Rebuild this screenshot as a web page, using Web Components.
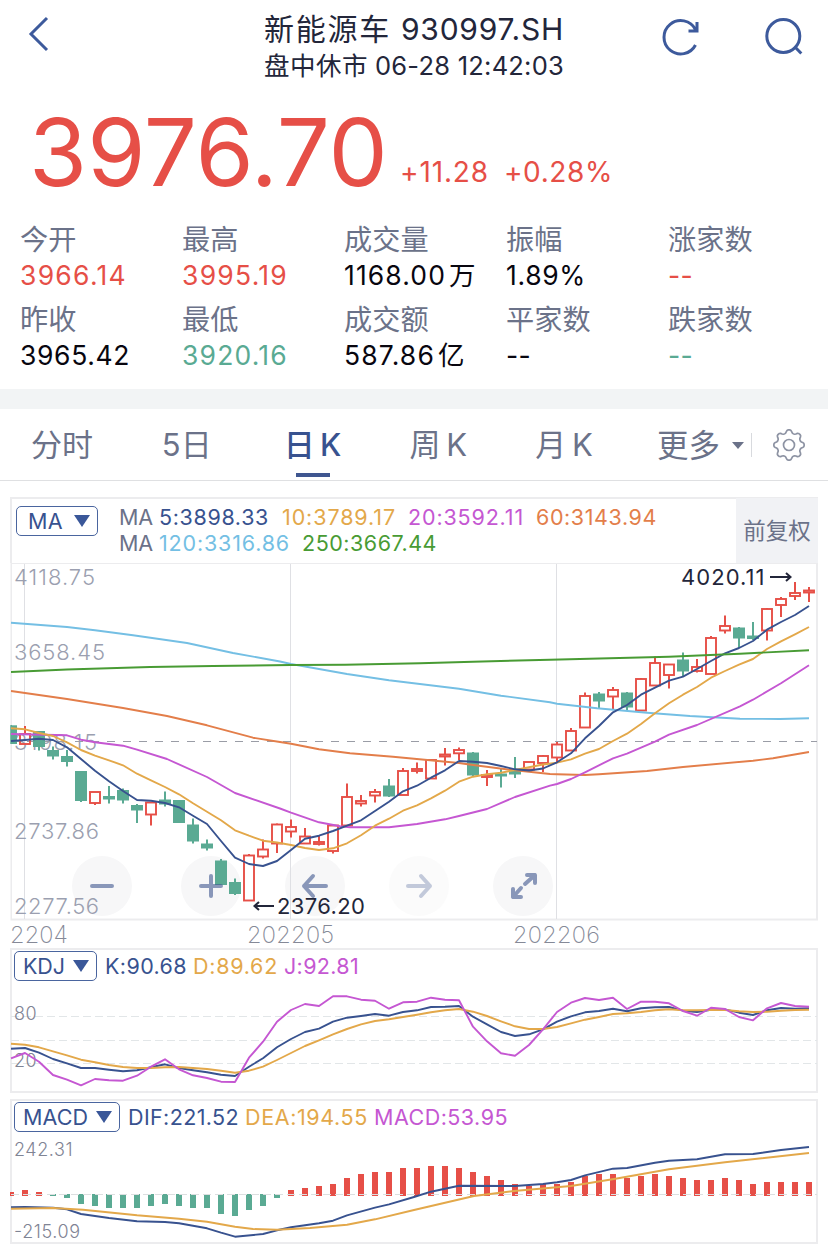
<!DOCTYPE html>
<html lang="zh-CN">
<head>
<meta charset="UTF-8">
<title>新能源车 930997.SH</title>
<style>
    :root {
        --ink: #23263a;
        --black: #08060f;
        --muted: #6b7289;
        --red: #e64f47;
        --green: #5aaa93;
        --blue: #38528f;
        --amber: #e3a84a;
        --pink: #c557d2;
        --orange: #e37e4a;
        --sky: #74bfe4;
        --leaf: #489b34;
        --band: #f2f4f5;
        --frame: #ececee;
    }

    body {
        margin: 0;
        width: 828px;
        height: 1247px;
        overflow: hidden;
        background: #fff;
        color: var(--ink);
        font-family: Inter, "Noto Sans CJK SC", sans-serif;
    }

    .band {
        height: 20px;
        background: var(--band);
    }

    .charts {
        display: flex;
        flex-direction: column;
        padding: 16px 10px 0;
    }
</style>
</head>
<body>
    <quote-header name="新能源车" code="930997.SH" state="盘中休市" time="06-28 12:42:03"></quote-header>
    <price-banner price="3976.70" change="+11.28" percent="+0.28%"></price-banner>
    <stat-grid>
        <stat-item label="今开" value="3966.14" w="107" tone="red"></stat-item>
        <stat-item label="最高" value="3995.19" w="106" tone="red"></stat-item>
        <stat-item label="成交量" value="1168.00" w="102" unit="万"></stat-item>
        <stat-item label="振幅" value="1.89%" w="80"></stat-item>
        <stat-item label="涨家数" value="--" w="25" tone="red"></stat-item>
        <stat-item label="昨收" value="3965.42" w="110"></stat-item>
        <stat-item label="最低" value="3920.16" w="106" tone="green"></stat-item>
        <stat-item label="成交额" value="587.86" w="91" unit="亿"></stat-item>
        <stat-item label="平家数" value="--" w="25"></stat-item>
        <stat-item label="跌家数" value="--" w="25" tone="green"></stat-item>
    </stat-grid>
    <div class="band"></div>
    <tab-bar>
        <tab-item>分时</tab-item>
        <tab-item>5日</tab-item>
        <tab-item active>日&#8201;K</tab-item>
        <tab-item>周&#8201;K</tab-item>
        <tab-item>月&#8201;K</tab-item>
    </tab-bar>
    <div class="charts">
        <k-panel></k-panel>
        <kdj-panel></kdj-panel>
        <macd-panel></macd-panel>
    </div>

<script>
    const STEP = 14;
    const LEFT = 11;
    const xAt = i => LEFT + i * STEP;

    // one y per trading day
    const daily = ys => ys.map((y, i) => `${xAt(i)},${y}`).join(' ');
    const line = (points, color, width = 1.9) =>
        `<polyline points="${points}" fill="none" stroke="var(--${color})" stroke-width="${width}" stroke-linejoin="round"/>`;
    const label = (x, y, w, text, cls = 'axis') =>
        `<text x="${x}" y="${y}" textLength="${w}" class="${cls}">${text}</text>`;

    class FitText extends HTMLElement {
        constructor() {
            super();
            this.attachShadow({ mode: 'open' });
            this.shadowRoot.innerHTML = `
                <style>
                    :host { display: inline-block; flex: none; white-space: nowrap; }
                </style>
                <slot></slot>
            `;
        }

        connectedCallback() {
            const target = Number(this.getAttribute('w'));
            const range = document.createRange();
            range.selectNodeContents(this);
            const natural = range.getBoundingClientRect().width;
            if (!target || !natural) return;
            this.style.letterSpacing = `${(target - natural) / this.textContent.length}px`;
            this.style.width = `${target}px`;
        }
    }

    class QuoteHeader extends HTMLElement {
        constructor() {
            super();
            this.attachShadow({ mode: 'open' });
        }

        connectedCallback() {
            this.shadowRoot.innerHTML = `
                <style>
                    :host {
                        display: grid;
                        grid-template-columns: 264px 300px 1fr;
                        height: 90px;
                    }
                    svg { display: block; fill: none; stroke: #3d5a9c; stroke-width: 3; }
                    .back { margin: 12px 0 0 20px; }
                    .title, .state { display: flex; justify-content: space-between; }
                    .title { height: 43px; padding-top: 8px; line-height: 43px; font-size: 30px; }
                    .state { height: 29px; line-height: 29px; font-size: 25.500px; }
                    .actions { display: flex; gap: 57px; padding: 14px 0 0 96px; }
                </style>
                <svg class="back" width="34" height="44"><path d="M27 6 11 22 27 38"/></svg>
                <div>
                    <div class="title">
                        <fit-text w="127">${this.getAttribute('name')}</fit-text>
                        <fit-text w="163">${this.getAttribute('code')}</fit-text>
                    </div>
                    <div class="state">
                        <fit-text w="104">${this.getAttribute('state')}</fit-text>
                        <fit-text w="189">${this.getAttribute('time')}</fit-text>
                    </div>
                </div>
                <div class="actions">
                    <svg width="46" height="46"><path d="M35.500 31A16.700 16.700 0 1 1 35.500 15.500M37 8V17H28.500"/></svg>
                    <svg width="46" height="46"><circle cx="20.300" cy="22" r="16.500"/><path d="M32 33 38.300 39.500"/></svg>
                </div>
            `;
        }
    }

    class PriceBanner extends HTMLElement {
        constructor() {
            super();
            this.attachShadow({ mode: 'open' });
        }

        connectedCallback() {
            this.shadowRoot.innerHTML = `
                <style>
                    :host {
                        display: flex;
                        align-items: flex-start;
                        height: 125px;
                        padding-left: 29px;
                        color: var(--red);
                        font-size: 28px;
                        line-height: 164px;
                    }
                    .price { font-size: 94px; line-height: 124px; }
                    .change { margin-left: 12px; }
                    .percent { margin-left: 15px; }
                </style>
                <fit-text class="price" w="359">${this.getAttribute('price')}</fit-text>
                <fit-text class="change" w="89">${this.getAttribute('change')}</fit-text>
                <fit-text class="percent" w="109">${this.getAttribute('percent')}</fit-text>
            `;
        }
    }

    class StatGrid extends HTMLElement {
        constructor() {
            super();
            this.attachShadow({ mode: 'open' });
            this.shadowRoot.innerHTML = `
                <style>
                    :host {
                        display: grid;
                        grid-template-columns: repeat(5, 162px);
                        grid-auto-rows: 80px;
                        box-sizing: border-box;
                        height: 174px;
                        padding: 5px 0 0 20px;
                    }
                </style>
                <slot></slot>
            `;
        }
    }

    class StatItem extends HTMLElement {
        constructor() {
            super();
            this.attachShadow({ mode: 'open' });
        }

        connectedCallback() {
            const unit = this.getAttribute('unit');
            this.shadowRoot.innerHTML = `
                <style>
                    :host { display: flex; flex-direction: column; }
                    .label { color: var(--muted); font-size: 28.200px; line-height: 41px; height: 38px; }
                    .value {
                        display: flex;
                        gap: 3px;
                        color: var(--${this.getAttribute('tone') || 'black'});
                        font-size: 26.500px;
                        line-height: 35px;
                    }
                </style>
                <div class="label">${this.getAttribute('label')}</div>
                <div class="value"><fit-text w="${this.getAttribute('w')}">${this.getAttribute('value')}</fit-text>${unit ? `<span>${unit}</span>` : ''}</div>
            `;
        }
    }

    class TabItem extends HTMLElement {
        constructor() {
            super();
            this.attachShadow({ mode: 'open' });
            this.shadowRoot.innerHTML = `
                <style>
                    :host {
                        display: flex;
                        flex-direction: column;
                        align-items: center;
                        justify-content: space-between;
                        height: 68px;
                        line-height: 72px;
                    }
                    :host([active]) { color: var(--blue); font-weight: 500; }
                    span { height: 64px; }
                    i { width: 34px; height: 4px; }
                    :host([active]) i { background: #3f5690; }
                </style>
                <span><slot></slot></span>
                <i></i>
            `;
        }
    }

    class TabBar extends HTMLElement {
        constructor() {
            super();
            this.attachShadow({ mode: 'open' });
            this.shadowRoot.innerHTML = `
                <style>
                    :host {
                        display: grid;
                        grid-template-columns: 124px 125.500px 126px 125.500px 126px 1fr;
                        box-sizing: border-box;
                        height: 72px;
                        border-bottom: 1px solid #dfe0e2;
                        color: var(--muted);
                        font-size: 31px;
                    }
                    .more {
                        display: flex;
                        align-items: center;
                        height: 72px;
                        padding-left: 30px;
                    }
                    .more-text { margin-top: -5px; font-size: 31.500px; }
                    .caret {
                        margin-left: 12px;
                        border: 6.500px solid transparent;
                        border-top: 7px solid var(--muted);
                        border-bottom: 0;
                    }
                    .rule { width: 1px; height: 24px; margin: 0 20px 0 7px; background: #d8dade; }
                    svg { fill: none; stroke: #8d93a3; stroke-width: 1.7; }
                </style>
                <slot></slot>
                <div class="more">
                    <span class="more-text">更多</span>
                    <span class="caret"></span>
                    <span class="rule"></span>
                    <svg width="34" height="34" viewBox="-17 -17 34 34">
                        <path stroke-linejoin="round" d="${TabBar.gear()}"/>
                        <circle r="5.500"/>
                    </svg>
                </div>
            `;
        }

        // eight rounded teeth
        static gear() {
            const points = [];
            for (let a = 0; a < 360; a += 4) {
                const t = a * Math.PI / 180;
                const r = 13.6 + 1.7 * Math.tanh(1.6 * Math.cos(8 * t));
                points.push(`${(r * Math.sin(t)).toFixed(2)} ${(-r * Math.cos(t)).toFixed(2)}`);
            }
            return `M${points.join('L')}Z`;
        }
    }

    class IndicatorPick extends HTMLElement {
        constructor() {
            super();
            this.attachShadow({ mode: 'open' });
        }

        connectedCallback() {
            this.shadowRoot.innerHTML = `
                <style>
                    :host {
                        display: flex;
                        align-items: center;
                        justify-content: space-between;
                        box-sizing: border-box;
                        height: 30px;
                        padding: 0 7px 0 8px;
                        border: 1.500px solid #4a659f;
                        border-radius: 5px;
                        color: var(--blue);
                        font-size: 21.500px;
                        line-height: 28px;
                    }
                    i {
                        border: 8px solid transparent;
                        border-top: 12px solid #3a5799;
                        border-bottom: 0;
                    }
                </style>
                <fit-text w="${this.getAttribute('w')}">${this.getAttribute('name')}</fit-text>
                <i></i>
            `;
        }
    }

    const panelStyle = `
        :host { display: block; box-sizing: border-box; font-size: 21.500px; }
        svg { display: block; font-family: Inter, sans-serif; }
        .axis { fill: #9b9fb0; font-size: 22px; font-weight: 300; }
        .small { fill: #7f8494; font-size: 18px; font-weight: 300; }
        .date { fill: #858997; font-size: 23.500px; font-weight: 200; }
        .mark { fill: #23263a; font-size: 22px; }
        .row { display: flex; }
        .muted { color: var(--muted); }
        .blue { color: var(--blue); }
        .amber { color: var(--amber); }
        .pink { color: var(--pink); }
        .orange { color: var(--orange); }
        .sky { color: var(--sky); }
        .leaf { color: var(--leaf); }
    `;

    // [up, body top, body bottom, high, low]
    const candles = [
        [0, 725.3, 744, 725, 744], [1, 734, 744, 726, 744], [0, 731, 747, 731, 750.5], [0, 750, 756.5, 746.5, 759.5],
        [0, 756, 762, 750, 766.5], [0, 771, 801, 771, 802], [1, 792, 803, 792, 805], [0, 796, 799.5, 786, 803.5],
        [0, 790, 800.5, 788.5, 803.5], [0, 805, 810.5, 804, 823], [1, 802.5, 814.5, 802, 825.5], [0, 799.5, 804.5, 791.5, 806.5],
        [0, 800, 823, 800, 823], [0, 824.5, 841.5, 818.5, 843.5], [0, 843.5, 848.5, 839.5, 850.5], [0, 860.5, 885, 859, 885],
        [0, 882, 894, 878.5, 895], [1, 855.5, 900.5, 854, 900], [1, 849.5, 856.5, 839.5, 858.5], [1, 824.5, 843.5, 823.5, 853],
        [1, 827, 831.5, 819.5, 837.5], [1, 836.5, 843.5, 828, 844], [1, 842, 844, 835.5, 845.5], [1, 825.5, 851, 825, 853.5],
        [1, 797, 825.5, 783.5, 826], [1, 801, 803.5, 795, 806.5], [1, 792, 795.5, 789, 802.5], [0, 785.5, 796.5, 779, 797],
        [1, 771, 795, 768, 795], [1, 769, 771, 762.5, 773.5], [1, 760, 778.5, 759, 779], [1, 754.5, 756.5, 748, 765.5],
        [1, 750, 753.3, 747.5, 760], [0, 752.5, 775.5, 752, 776], [1, 775, 777, 770, 786], [0, 773.5, 776.5, 768.5, 787.5],
        [0, 770, 774.5, 757, 778], [1, 762, 769.5, 762, 772], [1, 756, 763, 755, 772], [1, 744.5, 757.5, 742, 762],
        [1, 731, 750.5, 728, 751], [1, 696, 727.5, 692.5, 728], [0, 693.5, 701.5, 692, 708.5], [1, 690, 696.5, 687, 710],
        [0, 692.5, 707.5, 692, 710.5], [1, 679, 710.5, 678, 711], [1, 663, 685.5, 656.5, 686], [1, 664.5, 675, 664, 688.5],
        [0, 659.5, 671.5, 652.5, 676], [1, 667, 671, 659, 672.5], [1, 638, 674, 636, 674], [1, 626, 630.5, 615.5, 633.5],
        [0, 627.5, 638.5, 627, 648], [0, 635.5, 639, 622, 640], [1, 609, 630.5, 608, 640.5], [1, 599, 605, 597, 617],
        [1, 593, 596, 582, 600], [1, 590.5, 592.5, 587, 602]
    ];

    const ma5 = [741, 740, 738.7, 740, 747.3, 759, 770.7, 781.3, 791, 800, 800.7, 803, 807.3, 815.7, 824, 841, 857.7, 864, 866, 861,
        850, 838.7, 835.7, 831, 825.7, 820.3, 811, 801.7, 791.3, 785.7, 777.7, 770.3, 761, 761.7, 763, 766, 769.3, 770.5, 768.5, 762.3,
        753.3, 738.3, 726, 712.3, 705, 694.7, 687.7, 680.7, 676.7, 669, 661, 653.3, 648, 641, 629.7, 622, 615, 606];
    const ma10 = [728.3, 729.3, 733, 736, 742.3, 750, 755.7, 760.3, 765.3, 773.7, 780.3, 787, 794.3, 803.3, 811.7, 820.3, 830.3, 835.7, 840.7, 842.5,
        845, 848, 850, 848.3, 843.3, 835.3, 825.7, 818.7, 810.7, 805.3, 798.3, 790.7, 781.7, 776.7, 774.3, 772.7, 770, 767.3, 764.5, 762.7,
        759.3, 753.7, 749, 741, 733.7, 724, 713.3, 703.3, 694.7, 687, 677.7, 671, 664.7, 659, 649, 641.3, 634.3, 627];
    const ma20 = '11,734 67,735.3 81,739.7 95,742.3 123,745.7 137,749.7 167,759 207,777 235,793 280,808.5 291,812.7 319,822.3 340,826.3 350,827.3 389,827.3 417,824 445,819.3 459,816 487,809 515,797 550,785.7 557,784 571,779 585,772.3 613,758.3 627,753.7 655,741.7 669,734.7 697,725 740,706.3 753,699.7 781,683.3 809,665.3';
    const ma60 = '11,691 67,699 123,708 167,716 207,725.3 253,737.7 280,742 291,743.7 319,749.3 350,753.3 393,756.7 459,763 473,765 515,770.3 550,774 557,774.3 585,775 599,774.3 647,771 683,767 753,760.7 773,758.3 809,752';
    const ma120 = '11,622.7 67,627 95,630.3 133,635.3 187,643 233,653 280,661.5 291,664 347,674 389,680.3 459,688.7 501,695.7 550,702.3 557,703.7 597,708.3 647,712.7 690,716 740,718.7 780,719 809,718.3';
    const ma250 = '11,672 67,669.5 150,667 213,666 291,665 345,664.7 420,663.3 473,661.7 550,659.7 669,656.7 740,653.7 809,650.3';

    class KPanel extends HTMLElement {
        constructor() {
            super();
            this.attachShadow({ mode: 'open' });
        }

        candle([up, top, bottom, high, low], i) {
            const x = xAt(i);
            if (!up) {
                return `<path d="M${x} ${high}V${low}" stroke="var(--green)" stroke-width="2"/>
                    <rect x="${x - 6}" y="${top}" width="12" height="${bottom - top}" fill="var(--green)"/>`;
            }
            return `<path d="M${x} ${high}V${top}M${x} ${bottom}V${low}" stroke="var(--red)" stroke-width="2"/>
                <rect x="${x - 5}" y="${top}" width="10" height="${bottom - top}" fill="none" stroke="var(--red)" stroke-width="1.9"/>`;
        }

        connectedCallback() {
            const circles = [102, 211, 315, 419, 523].map((x, i) =>
                `<circle cx="${x}" cy="886" r="30" fill="${i === 3 ? '#fbfbfb' : '#f7f7f8'}"/>`).join('');
            this.shadowRoot.innerHTML = `
                <style>
                    ${panelStyle}
                    :host { height: 451px; }
                    .head {
                        display: grid;
                        grid-template-columns: 82px 1fr 82px;
                        box-sizing: border-box;
                        height: 66px;
                        padding-left: 4px;
                        border: 2px solid var(--frame);
                        border-right: 0;
                        border-bottom: 0;
                    }
                    indicator-pick { margin-top: 7px; padding-left: 11px; }
                    .legend { padding: 5px 0 0 21px; line-height: 26px; }
                    .row { height: 26px; }
                    .adjust {
                        margin-top: -1px;
                        background: #f1f2f5;
                        color: var(--muted);
                        font-size: 22.500px;
                        line-height: 66px;
                        text-align: center;
                    }
                    .plot { clip-path: inset(0 0 0 0.500px); }
                </style>
                <div class="head">
                    <indicator-pick name="MA" w="35"></indicator-pick>
                    <div class="legend">
                        <div class="row">
                            <fit-text class="muted" w="34" style="margin-right:6px">MA</fit-text>
                            <fit-text class="blue" w="110" style="margin-right:13px">5:3898.33</fit-text>
                            <fit-text class="amber" w="114" style="margin-right:12px">10:3789.17</fit-text>
                            <fit-text class="pink" w="116" style="margin-right:12px">20:3592.11</fit-text>
                            <fit-text class="orange" w="121">60:3143.94</fit-text>
                        </div>
                        <div class="row">
                            <fit-text class="muted" w="34" style="margin-right:6px">MA</fit-text>
                            <fit-text class="sky" w="131" style="margin-right:12px">120:3316.86</fit-text>
                            <fit-text class="leaf" w="135">250:3667.44</fit-text>
                        </div>
                    </div>
                    <div class="adjust">前复权</div>
                </div>
                <svg class="plot" width="808" height="385" viewBox="10 563 808 385">
                    <rect x="11" y="563" width="806" height="356.500" fill="none" stroke="var(--frame)" stroke-width="2"/>
                    ${circles}
                    <path d="M24.500 564V919M290.500 564V919M556.500 564V919" stroke="#dfe0e4" stroke-width="1"/>
                    ${label(14, 585, 81, '4118.75')}
                    ${label(14, 660, 91, '3658.45')}
                    ${label(14, 749.5, 83, '3198.15')}
                    ${label(14, 838.5, 85, '2737.86')}
                    ${label(14, 914, 85, '2277.56')}
                    <path d="M11 741.500H817" stroke="#9a9da6" stroke-width="1.200" stroke-dasharray="8 8"/>
                    ${candles.map((c, i) => this.candle(c, i)).join('')}
                    ${line(ma120, 'sky')}
                    ${line(ma60, 'orange')}
                    ${line(ma20, 'pink')}
                    ${line(daily(ma10), 'amber')}
                    ${line(daily(ma5), 'blue')}
                    ${line(ma250, 'leaf')}
                    <g fill="none" stroke="#3f5690" stroke-opacity=".6" stroke-width="4" stroke-linecap="round" stroke-linejoin="round">
                        <path d="M92 886H112M201 886H221M211 876V896"/>
                        <path d="M326 886H304M313 876 304 886 313 896"/>
                        <path stroke-opacity=".3" d="M408 886H430M421 876 430 886 421 896"/>
                        <path d="M525 884 535 875M527 875H535V883M521 888 513 897M513 889V897H521"/>
                    </g>
                    ${label(681, 585, 83.5, '4020.11', 'mark')}
                    ${label(277, 914, 88, '2376.20', 'mark')}
                    <path d="M770 577H790M786 573 790.500 577 786 581M274 906H255M259 902 254.500 906 259 910" fill="none" stroke="#23263a" stroke-width="2"/>
                    ${label(10, 943, 58, '2204', 'date')}
                    ${label(247, 943, 87, '202205', 'date')}
                    ${label(513, 943, 87, '202206', 'date')}
                </svg>
            `;
        }
    }

    const kLine = [1048.7, 1048, 1052.7, 1059, 1063.3, 1068, 1068, 1069.7, 1071.3, 1070.3, 1067.3, 1064.3, 1068, 1070.3, 1072.3, 1074.7, 1076, 1066.7, 1058.3, 1047.3,
        1039, 1032, 1028.7, 1021.7, 1017.7, 1016, 1014, 1015.7, 1012, 1010.3, 1007, 1006.7, 1006, 1016.7, 1024.3, 1032, 1036, 1034.3, 1029.3, 1021.7,
        1016.3, 1012.3, 1011, 1008.7, 1011.3, 1008.3, 1007.3, 1007, 1010.7, 1012, 1009.7, 1009.3, 1012.7, 1015, 1010.3, 1008, 1008.7, 1008.3];
    const dLine = [1043.7, 1044.7, 1047.3, 1051.3, 1055.3, 1059.7, 1062.3, 1065, 1067, 1068, 1068, 1067.3, 1067, 1068, 1069, 1070.7, 1072.7, 1070.7, 1066.7, 1060,
        1053, 1046, 1040.3, 1034.3, 1029, 1024.3, 1021, 1019.3, 1017, 1014.7, 1012.3, 1010.3, 1009, 1011.7, 1016, 1021.3, 1026.3, 1029, 1029, 1027,
        1023.3, 1019.7, 1017, 1014, 1013.3, 1012, 1010.3, 1009.3, 1010.3, 1010.3, 1010, 1010, 1011.3, 1012, 1011.7, 1010.7, 1010, 1009.7];
    const jLine = [1058.3, 1053, 1061.7, 1075, 1079.7, 1085.3, 1079, 1080.3, 1080.7, 1075.7, 1066.7, 1059.3, 1069.3, 1075.3, 1078, 1081.7, 1082, 1057.7, 1041.7, 1021.7,
        1010, 1004, 1006, 996.3, 996.3, 999.7, 1000.7, 1008.7, 1002.3, 1001.7, 997.7, 999.7, 1000.3, 1026.7, 1041.3, 1053.3, 1055.7, 1045, 1029.3, 1012,
        1002.7, 998, 1000, 997.7, 1009, 1001.7, 1001.7, 1003.3, 1011, 1015.7, 1007.7, 1009, 1017, 1020.3, 1008.3, 1003, 1006, 1006.7];

    const subPanelStyle = `
        ${panelStyle}
        :host {
            height: 145px;
            border: 2px solid var(--frame);
        }
        .row { height: 32px; padding-left: 2px; line-height: 33px; }
        indicator-pick { margin: 1px 8px 0 0; }
        svg { margin: 0 -2px 0 -2px; }
    `;

    class KdjPanel extends HTMLElement {
        constructor() {
            super();
            this.attachShadow({ mode: 'open' });
        }

        connectedCallback() {
            this.shadowRoot.innerHTML = `
                <style>
                    ${subPanelStyle}
                    :host { margin-bottom: 6px; }
                    indicator-pick { width: 83px; }
                </style>
                <div class="row">
                    <indicator-pick name="KDJ" w="42"></indicator-pick>
                    <fit-text class="blue" w="82" style="margin-right:6px">K:90.68</fit-text>
                    <fit-text class="amber" w="85" style="margin-right:6px">D:89.62</fit-text>
                    <fit-text class="pink" w="75">J:92.81</fit-text>
                </div>
                <svg width="808" height="109" viewBox="10 982 808 109">
                    <path d="M11 1016.500H817M11 1040.500H817M11 1063.500H817" stroke="#e2e6e8" stroke-width="1.200" stroke-dasharray="8 4"/>
                    ${label(14, 1019.5, 22.5, '80', 'small')}
                    ${label(14, 1066.5, 22.5, '20', 'small')}
                    ${line(daily(kLine), 'blue')}
                    ${line(daily(dLine), 'amber')}
                    ${line(daily(jLine), 'pink')}
                </svg>
            `;
        }
    }

    const bars = [1192, 1190, 1192, 1196, 1198, 1204, 1206, 1208, 1208, 1208, 1206, 1204, 1206, 1208, 1208, 1214, 1216, 1210, 1206, 1198,
        1190, 1188, 1186, 1184, 1178, 1174, 1172, 1172, 1168, 1168, 1166, 1166, 1168, 1172, 1176, 1180, 1184, 1186, 1184, 1184,
        1182, 1176, 1174, 1174, 1178, 1176, 1174, 1176, 1178, 1180, 1180, 1178, 1180, 1184, 1182, 1182, 1182, 1182];
    const dif = '11,1207.3 25,1207 53,1207.7 67,1209.3 81,1214 109,1218 137,1221.3 165,1222 179,1223.3 207,1228.3 221,1232.7 235,1236.7 263,1234 277,1230.3 291,1227.3 319,1223.3 333,1220.7 347,1215.3 375,1207.7 389,1204.3 414,1197 431,1191.7 445,1188.7 459,1185.7 515,1186 543,1184 557,1182.3 571,1180 585,1175.3 613,1168.7 627,1168 655,1162.7 669,1160.7 697,1159.3 725,1154.3 753,1154 781,1150 809,1147';
    const dea = '11,1208.7 53,1208 83,1209.7 137,1215.3 179,1218.7 207,1221.7 235,1226.7 253,1229 277,1229.7 310,1228 347,1224.7 375,1219.3 414,1210 474,1196 514,1191 571,1186 614,1179 669,1169.3 725,1162.3 809,1153';

    class MacdPanel extends HTMLElement {
        constructor() {
            super();
            this.attachShadow({ mode: 'open' });
        }

        bar(y, i) {
            // falling bars hang from the zero line
            const down = y > 1195;
            const top = down ? 1194 : y;
            const bottom = down ? y : 1196;
            return `<rect x="${xAt(i) - 3}" y="${top}" width="6" height="${bottom - top}" fill="var(--${down ? 'green' : 'red'})"/>`;
        }

        connectedCallback() {
            this.shadowRoot.innerHTML = `
                <style>
                    ${subPanelStyle}
                    indicator-pick { width: 106px; }
                </style>
                <div class="row">
                    <indicator-pick name="MACD" w="65"></indicator-pick>
                    <fit-text class="blue" w="111" style="margin-right:6px">DIF:221.52</fit-text>
                    <fit-text class="amber" w="123" style="margin-right:6px">DEA:194.55</fit-text>
                    <fit-text class="pink" w="134">MACD:53.95</fit-text>
                </div>
                <svg width="808" height="109" viewBox="10 1133 808 109">
                    ${label(14, 1156, 58.5, '242.31', 'small')}
                    ${label(14, 1238, 66, '-215.09', 'small')}
                    ${bars.map((y, i) => this.bar(y, i)).join('')}
                    <path d="M11 1194.500H817" stroke="#dcdfe0" stroke-width="1" stroke-dasharray="8 4"/>
                    ${line(dif, 'blue')}
                    ${line(dea, 'amber')}
                </svg>
            `;
        }
    }

    customElements.define('fit-text', FitText);
    customElements.define('indicator-pick', IndicatorPick);
    customElements.define('quote-header', QuoteHeader);
    customElements.define('price-banner', PriceBanner);
    customElements.define('stat-item', StatItem);
    customElements.define('stat-grid', StatGrid);
    customElements.define('tab-item', TabItem);
    customElements.define('tab-bar', TabBar);
    customElements.define('k-panel', KPanel);
    customElements.define('kdj-panel', KdjPanel);
    customElements.define('macd-panel', MacdPanel);
</script>
</body>
</html>
